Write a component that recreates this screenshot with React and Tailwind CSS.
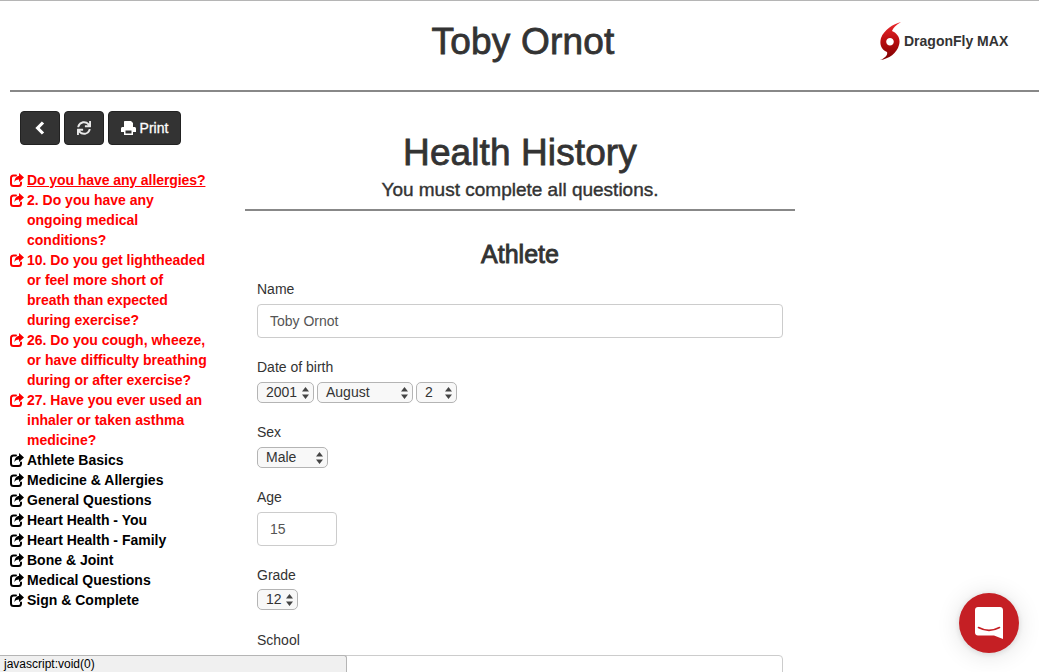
import React from 'react';
import { FaSync } from 'react-icons/fa';

const font = { fontFamily: '"Liberation Sans", Arial, sans-serif' };

const alerts = [
    { text: 'Do you have any allergies?', underline: true },
    { text: '2. Do you have any ongoing medical conditions?' },
    { text: '10. Do you get lightheaded or feel more short of breath than expected during exercise?' },
    { text: '26. Do you cough, wheeze, or have difficulty breathing during or after exercise?' },
    { text: '27. Have you ever used an inhaler or taken asthma medicine?' },
];

const sections = [
    'Athlete Basics',
    'Medicine & Allergies',
    'General Questions',
    'Heart Health - You',
    'Heart Health - Family',
    'Bone & Joint',
    'Medical Questions',
    'Sign & Complete',
];

// share-square-o, the package version is too thin at this size
function ShareIcon() {
    return (
        <svg className="mt-[3px] mr-[3px] shrink-0" width="14" height="14" viewBox="0 0 14 14">
            <path fill="none" stroke="currentColor" strokeWidth="2" strokeLinecap="round" d="M6 2.5 H3.5 C2 2.5 1 3.5 1 5 V10.5 C1 12 2 13 3.5 13 H8.5 C10 13 11 12 11 10.5 V9.5" />
            <path fill="currentColor" d="M9 0 L14 4.5 L9 9 V6.5 C7 6.5 5.5 7.2 4.5 9 C4.5 5.5 6.5 3 9 3 Z" />
        </svg>
    );
}

function MenuItem({ text, red, underline }) {
    return (
        <a href="#" className={`flex w-[197px] font-bold text-sm leading-5 ${red ? 'text-[#ff0000]' : 'text-black'}`}>
            <ShareIcon />
            <span className={underline ? 'underline whitespace-nowrap tracking-[-0.08px]' : ''}>{text}</span>
        </a>
    );
}

function SelectBox({ value, width }) {
    return (
        <div className={`relative h-[21px] ${width} rounded-[5px] border border-[#b4b4b4] bg-[#f8f8f8] pl-2 text-sm leading-[19px] text-[#333]`}>
            {value}
            {/* up/down arrows of the native control */}
            <svg className="absolute right-[4px] top-[4px]" width="7" height="12" viewBox="0 0 7 12">
                <path d="M3.5 0 L7 4.5 L0 4.5 Z M3.5 12 L7 7.5 L0 7.5 Z" fill="#444" />
            </svg>
        </div>
    );
}

function Field({ label, children, className }) {
    return (
        <div className={className}>
            <div className="text-sm leading-5 text-[#333] mb-[5px]">{label}</div>
            {children}
        </div>
    );
}

function Logo() {
    return (
        <div className="flex items-center">
            <svg className="ml-[1px]" width="22" height="38" viewBox="0 0 22 38">
                <defs>
                    <linearGradient id="dfly" x1="0" y1="0" x2="0" y2="1">
                        <stop offset="0" stopColor="#ee2a2e" />
                        <stop offset="0.5" stopColor="#b80d10" />
                        <stop offset="1" stopColor="#7d0000" />
                    </linearGradient>
                </defs>
                <path
                    fillRule="evenodd"
                    fill="url(#dfly)"
                    d="M21 0 C13 2 4 8 1 16 C-1 23 2 28 7 30 C8 33 5 36 0 38 C9 37 17 31 19 23 C21 16 17 11 12 9 C13 6 16 3 21 0 Z M10 16 C12 16 13.8 17.6 13.8 19.7 C13.8 21.8 12 23.4 10 23.4 C8 23.4 6.2 21.8 6.2 19.7 C6.2 17.6 8 16 10 16 Z"
                />
            </svg>
            <span className="ml-[2px] font-bold text-sm text-[#333] whitespace-nowrap">DragonFly MAX</span>
        </div>
    );
}

export default function App() {
    return (
        <div className="h-[672px] overflow-hidden bg-white border-t border-[#b5b5b5]" style={font}>
            {/* Header */}
            <div className="ml-[10px] h-[91px] border-b-2 border-[#888] flex items-start relative">
                <h1 className="w-full text-center text-[37px] leading-[40px] pt-[21px] pr-[3px] text-[#333] tracking-[0.2px] [-webkit-text-stroke:0.8px_#333]">Toby Ornot</h1>
                <div className="absolute left-[869px] top-[21px]"><Logo /></div>
            </div>

            <div className="flex">
                {/* Sidebar */}
                <div className="w-[245px] shrink-0 pl-[10px] pt-[19px]">
                    <div className="flex gap-1 ml-[10px] mb-[25px]">
                        <button className="w-[40px] h-[34px] bg-[#333] border border-[#222] rounded flex items-center justify-center text-white">
                            <svg width="10" height="14" viewBox="0 0 10 14">
                                <path fill="none" stroke="currentColor" strokeWidth="3.2" d="M8 1.5 L2.6 7 L8 12.5" />
                            </svg>
                        </button>
                        <button className="w-[40px] h-[34px] bg-[#333] border border-[#222] rounded flex items-center justify-center text-[#e8e8e8]">
                            <FaSync className="w-[14px] h-[14px]" />
                        </button>
                        <button className="w-[73px] h-[34px] bg-[#333] border border-[#222] rounded flex items-center justify-center text-white text-sm [-webkit-text-stroke:0.3px_#fff]">
                            <svg className="mr-[4px]" width="15" height="14" viewBox="0 0 15 14">
                                <path fill="currentColor" fillRule="evenodd" d="M4 0 H10 L12 2 V6 H3 V1 C3 0.4 3.4 0 4 0 Z M1.5 6 H13.5 C14.3 6 15 6.7 15 7.5 V11 H12 V14 H3 V11 H0 V7.5 C0 6.7 0.7 6 1.5 6 Z M4.5 9.5 V12.5 H10.5 V9.5 Z" />
                            </svg>
                            Print
                        </button>
                    </div>
                    {alerts.map((a) => <MenuItem key={a.text} text={a.text} underline={a.underline} red />)}
                    {sections.map((s) => <MenuItem key={s} text={s} />)}
                </div>

                {/* Main form */}
                <div className="w-[550px] shrink-0">
                    <div className="border-b-2 border-[#888] h-[119px] text-center text-[#333]">
                        <h1 className="pt-[41px] text-[37px] leading-[40px] tracking-[0.1px] [-webkit-text-stroke:0.8px_#333]">Health History</h1>
                        <div className="pt-[7px] text-[19px] leading-5 [-webkit-text-stroke:0.4px_#333]">You must complete all questions.</div>
                    </div>
                    <div className="px-[12px]">
                        <h3 className="pt-[28px] text-center text-[25px] leading-[30px] text-[#333] mb-[10px] [-webkit-text-stroke:0.9px_#333]">Athlete</h3>
                        <Field label="Name" className="mb-[19px]">
                            <div className="h-[34px] border border-[#ccc] rounded px-3 text-sm leading-[32px] text-[#555]">Toby Ornot</div>
                        </Field>
                        <Field label="Date of birth" className="mb-[19px]">
                            <div className="flex gap-[3px]">
                                <SelectBox value="2001" width="w-[57px]" />
                                <SelectBox value="August" width="w-[96px]" />
                                <SelectBox value="2" width="w-[41px]" />
                            </div>
                        </Field>
                        <Field label="Sex" className="mb-[19px]">
                            <SelectBox value="Male" width="w-[71px]" />
                        </Field>
                        <Field label="Age" className="mb-[19px]">
                            <div className="h-[34px] w-[80px] border border-[#ccc] rounded px-3 text-sm leading-[32px] text-[#555]">15</div>
                        </Field>
                        <Field label="Grade" className="mb-[20px]">
                            <div className="-mt-[1px]"><SelectBox value="12" width="w-[41px]" /></div>
                        </Field>
                        <Field label="School">
                            <div className="h-[34px] border border-[#ccc] rounded" />
                        </Field>
                    </div>
                </div>
            </div>

            {/* Browser status bubble */}
            <div className="fixed left-0 bottom-0 w-[347px] h-[17px] bg-[#f0f0f0] border-t border-r border-[#b5b5b5] rounded-tr-[3px] pl-[4px] text-xs leading-4 text-black">
                javascript:void(0)
            </div>

            {/* Chat launcher */}
            <div className="fixed left-[959px] top-[593px] w-[60px] h-[60px] rounded-full bg-[#c51f24] shadow-[0_1px_6px_rgba(0,0,0,0.12),0_2px_24px_rgba(0,0,0,0.12)] flex items-center justify-center">
                <svg width="28" height="32" viewBox="0 0 28 32">
                    <path fill="#fff" d="M3 0 H25 C26.7 0 28 1.3 28 3 V32 L19 28.5 H3 C1.3 28.5 0 27.2 0 25.5 V3 C0 1.3 1.3 0 3 0 Z" />
                    <path fill="none" stroke="#c51f24" strokeWidth="1.6" strokeLinecap="round" d="M3.5 20.5 C10 24 18 24 24.5 20.5" />
                </svg>
            </div>
        </div>
    );
}
